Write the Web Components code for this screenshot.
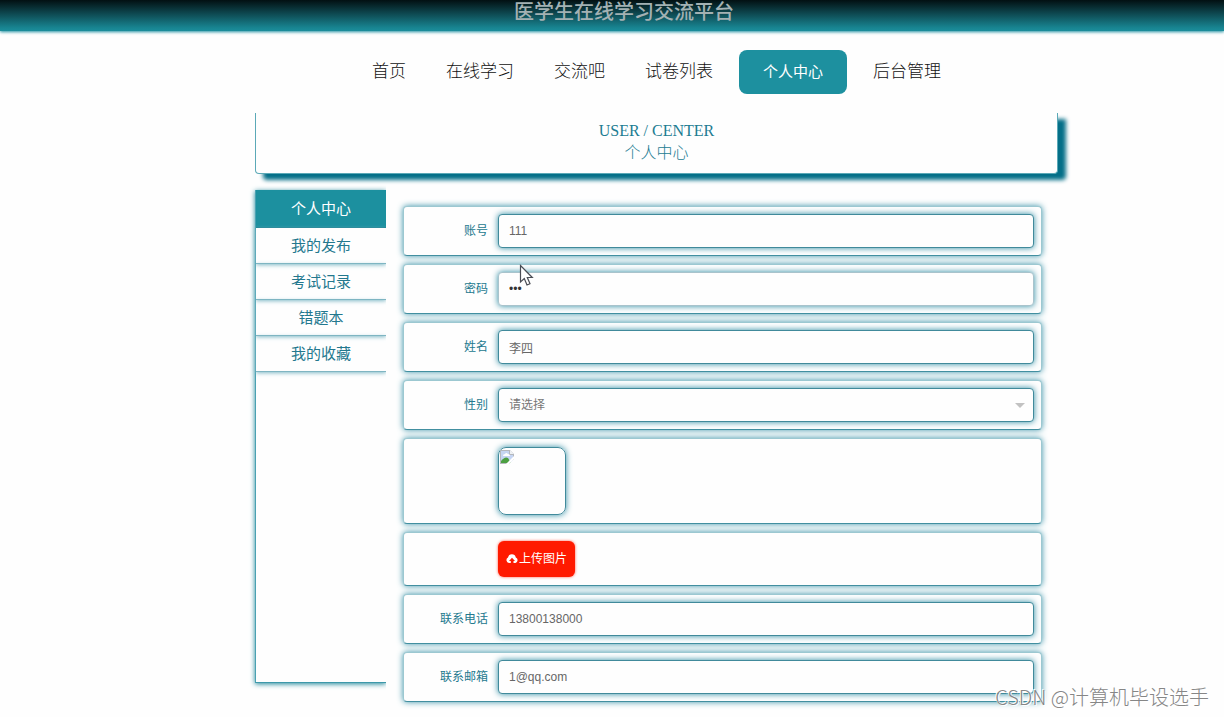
<!DOCTYPE html>
<html lang="zh-CN">
<head>
<meta charset="utf-8">
<title>医学生在线学习交流平台</title>
<style>
body { margin: 0; background: #fefefe; font-family: "Liberation Sans", "Noto Sans CJK SC", sans-serif; }
</style>
</head>
<body>
<study-app></study-app>
<script>
const define = (name, html, setup) => customElements.define(name, class extends HTMLElement {
  connectedCallback() {
    if (this.shadowRoot) return;
    const root = this.attachShadow({ mode: 'open' });
    root.innerHTML = '<style>*{box-sizing:border-box}:host{display:block}</style>' + html;
    if (setup) setup(this, root);
  }
});

define('site-header', `
<style>
:host { height: 31px; background: linear-gradient(#021012, #0e4a52 45%, #188592 90%, #1b8d9b); box-shadow: 0 1px 3px #1d8fa0; }
h1 { margin: 0; padding-left: 24px; text-align: center; font-size: 20px; line-height: 24px; font-weight: 500; color: #a3b1b3; }
</style>
<h1><slot></slot></h1>`);

define('nav-link', `
<style>
a { display: block; padding: 0 20px; font-size: 17px; line-height: 44px; font-weight: 300; color: #111; text-decoration: none; white-space: nowrap; }
:host([active]) a { margin: 0 6px; padding: 0 24px; font-size: 15px; font-weight: 400; color: #fff; background: #1d909f; border-radius: 8px; }
</style>
<a href="#"><slot></slot></a>`);

define('site-nav', `
<style>
nav { display: flex; justify-content: center; padding-top: 19px; }
</style>
<nav aria-label="主导航"><slot></slot></nav>`);

define('page-banner', `
<style>
:host { margin-top: 19px; padding: 7px 0 9px; text-align: center; color: #1c7c92; background: #fefefe;
  border: 1px solid #5ba9b7; border-top: 0; border-radius: 0 0 4px 4px; box-shadow: 8px 6px 4px #046f88; font-size: 16px; line-height: 22px; }
p { margin: 0; font-family: "Liberation Serif", "Noto Sans CJK SC", serif; }
h2 { margin: 0; font-size: 16px; font-weight: 300; }
</style>
<p><slot name="en"></slot></p><h2><slot></slot></h2>`);

define('side-item', `
<style>
a { display: block; height: 36px; line-height: 35px; text-align: center; font-size: 15px; color: #23788e; text-decoration: none;
  border-bottom: 1px solid #7fb5c2; box-shadow: 0 1px 4px #7fb9c6; }
:host([active]) a { height: 38px; line-height: 38px; color: #fff; background: #1c909f; border-bottom-color: #167f90; box-shadow: none; }
</style>
<a href="#"><slot></slot></a>`);

define('side-menu', `
<style>
:host { min-height: 493px; border-left: 1px solid #4aa1b2; border-bottom: 1px solid #3d98aa; box-shadow: 0 1px 5px #1b8598; clip-path: inset(-8px 0 -8px -8px); }
</style>
<nav aria-label="个人中心菜单"><slot></slot></nav>`);

define('form-row', `
<style>
:host { position: relative; border: 1px solid #9cc8d1; border-bottom-color: #428fa0; border-radius: 4px; box-shadow: 0 0 6px #3a93a9; background: #fefefe; }
div { display: grid; grid-template-columns: 77px 1fr; column-gap: 10px; align-items: center; padding: 7px; }
:host([tall]) div { padding: 8px; column-gap: 9px; }
label { font-size: 12px; line-height: 18px; text-align: right; color: #24798e; white-space: nowrap; }
input, select { display: block; width: 100%; height: 34px; margin: 0; padding: 0 10px; border: 1px solid #418a9b; border-radius: 4px;
  box-shadow: 0 0 6px #2b8ca3; background: #fefefe; color: #666; font: 12px/18px "Liberation Sans", "Noto Sans CJK SC", sans-serif; outline: 0; }
input[type=password] { border-color: #a9c3cc; color: #333; }
select { appearance: none; color: #777; background: #fefefe url("data:image/svg+xml,%3Csvg xmlns='http://www.w3.org/2000/svg' width='10' height='5'%3E%3Cpath d='M0 0h10L5 5z' fill='%23c2c2c2'/%3E%3C/svg%3E") no-repeat right 8px center; }
</style>
<div><label></label><slot></slot></div>`, (host, root) => {
  const type = host.getAttribute('type');
  if (!type) return;
  const label = root.querySelector('label');
  const field = document.createElement(type === 'select' ? 'select' : 'input');
  field.id = 'field';
  if (type === 'select') field.add(new Option(host.getAttribute('value')));
  else { field.type = type; field.value = host.getAttribute('value'); }
  label.htmlFor = 'field';
  label.textContent = host.getAttribute('label');
  root.querySelector('div').append(field);
  root.querySelector('div > slot').remove();
});

define('avatar-preview', `
<style>
:host { width: 68px; height: 68px; padding: 2px 1px; border: 1px solid #418a9b; border-radius: 8px; box-shadow: 0 0 6px #2b8ca3; }
svg { display: block; }
</style>
<svg width="14" height="14" viewBox="0 0 14 14" role="img" aria-label="头像">
<path d="M0 0h10l4 4v10H0z" fill="#b5b8bd"/><path d="M1 1h8v4h4v8H1z" fill="#c5d5f3"/>
<path d="M10 0v4h4z" fill="#eef1f4"/><path d="M3 6q0-2 2-2 1-2 3 0 2 0 2 2z" fill="#fff"/>
<path d="M1 13V11Q5 6 8 8L11 13z" fill="#4c9f42"/><path d="M6 14L14 6v3L9 14z" fill="#fff"/><path d="M9 14l5-5v5z" fill="#fefefe"/>
</svg>`);

define('upload-button', `
<style>
button { display: flex; align-items: center; gap: 1px; height: 36px; padding: 0 8px; border: 0; border-radius: 6px; background: #ff1a00; box-shadow: 0 0 3px #ff5a48;
  color: #fff; font: 12px/18px "Liberation Sans", "Noto Sans CJK SC", sans-serif; white-space: nowrap; }
</style>
<button type="button"><svg width="12" height="12" viewBox="0 0 12 12" aria-hidden="true"><path d="M3 10A3 3 0 0 1 2 4.400A4 4 0 0 1 9.800 4.400A3 3 0 0 1 9.500 10H7.500V8H9L6 4.800 3 8H4.800V10z" fill="#fff"/></svg><slot></slot></button>`);

define('mouse-pointer', `
<style>:host { position: absolute; left: 116px; top: 0; }svg { display: block; }</style>
<svg width="15" height="23" viewBox="0 0 15 23" aria-hidden="true"><path d="M1.500 1.500V18L5.300 14.500 8 21 11 19.700 8.300 13.500H13.300z" fill="#fff" stroke="#4a4d55" stroke-width="1.200"/></svg>`);

define('water-mark', `
<style>
:host { position: absolute; right: 15px; bottom: 6px; font-size: 20px; line-height: 28px; color: #868686; text-shadow: 1px 1px 0 #fff, -1px -1px 0 #fff; white-space: nowrap; font-weight: 300; font-family: "Noto Sans CJK SC", sans-serif; }
</style><slot></slot>`);

define('study-app', `
<style>
:host { position: relative; min-height: 100vh; overflow: hidden; }
.page { display: grid; grid-template-columns: 255fr 803fr 166fr; padding-bottom: 15px; }
main { grid-column: 2; min-width: 0; }
.content { display: grid; grid-template-columns: 131px minmax(0, 1fr); column-gap: 17px; align-items: start; margin-top: 16px; }
form { display: grid; gap: 8px; padding: 16px 16px 0 0; }
.field { position: relative; }
</style>
<site-header>医学生在线学习交流平台</site-header>
<div class="page"><main>
  <site-nav>
    <nav-link>首页</nav-link><nav-link>在线学习</nav-link><nav-link>交流吧</nav-link><nav-link>试卷列表</nav-link><nav-link active>个人中心</nav-link><nav-link>后台管理</nav-link>
  </site-nav>
  <page-banner><span slot="en">USER / CENTER</span>个人中心</page-banner>
  <div class="content">
    <side-menu>
      <side-item active>个人中心</side-item><side-item>我的发布</side-item><side-item>考试记录</side-item><side-item>错题本</side-item><side-item>我的收藏</side-item>
    </side-menu>
    <form>
      <form-row type="text" label="账号" value="111"></form-row>
      <div class="field"><form-row type="password" label="密码" value="111"></form-row><mouse-pointer></mouse-pointer></div>
      <form-row type="text" label="姓名" value="李四"></form-row>
      <form-row type="select" label="性别" value="请选择"></form-row>
      <form-row tall><avatar-preview></avatar-preview></form-row>
      <form-row tall><upload-button>上传图片</upload-button></form-row>
      <form-row type="text" label="联系电话" value="13800138000"></form-row>
      <form-row type="text" label="联系邮箱" value="1@qq.com"></form-row>
    </form>
  </div>
</main></div>
<water-mark>CSDN @计算机毕设选手</water-mark>`);
</script>
</body>
</html>
